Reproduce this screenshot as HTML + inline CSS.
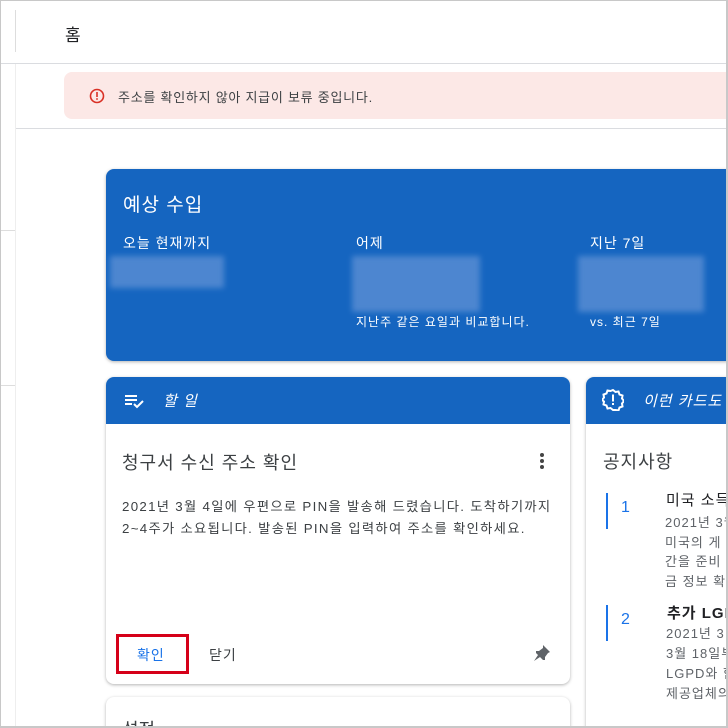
<!DOCTYPE html>
<html><head><meta charset="utf-8"><style>
*{margin:0;padding:0;box-sizing:border-box}
html,body{width:728px;height:728px;overflow:hidden}
body{background:#fff;font-family:"Liberation Sans","Noto Sans CJK KR",sans-serif;position:relative;color:#3c4043}
.a{position:absolute;white-space:nowrap}
.k{letter-spacing:1px}
.blur{position:absolute;background:#5b8fd4;filter:blur(3px);opacity:.8}
</style></head><body>
<div class="a" style="left:15px;top:10px;width:1px;height:42px;background:#ddd"></div>
<div class="a" style="left:15px;top:64px;width:1px;height:664px;background:#eee"></div>
<div class="a" style="left:0;top:63px;width:728px;height:1px;background:#dadce0"></div>
<div class="a" style="left:0;top:230px;width:15px;height:1px;background:#ddd"></div>
<div class="a" style="left:0;top:385px;width:15px;height:1px;background:#ddd"></div>
<div class="a" style="left:65px;top:21px;font-size:17px;color:#202124">홈</div>

<div class="a" style="left:64px;top:72px;width:670px;height:47px;background:#fce8e6;border-radius:8px"></div>
<svg class="a" style="left:89px;top:88px" width="16" height="16" viewBox="0 0 16 16"><circle cx="8" cy="8" r="6.5" fill="none" stroke="#d93025" stroke-width="1.6"/><rect x="7.2" y="4" width="1.6" height="5" fill="#d93025"/><rect x="7.2" y="10.2" width="1.6" height="1.6" fill="#d93025"/></svg>
<div class="a" style="left:118px;top:87px;font-size:13px;color:#3c4043;letter-spacing:.75px">주소를 확인하지 않아 지급이 보류 중입니다.</div>
<div class="a" style="left:16px;top:128px;width:712px;height:1px;background:#dadce0"></div>

<div class="a" style="left:106px;top:169px;width:630px;height:192px;background:#1565c0;border-radius:8px;box-shadow:0 1px 3px rgba(0,0,0,.3)"></div>
<div class="a k" style="left:123px;top:190px;font-size:19px;color:#fff">예상 수입</div>
<div class="a k" style="left:123px;top:233px;font-size:14px;color:#fff">오늘 현재까지</div>
<div class="a k" style="left:356px;top:233px;font-size:14px;color:#fff">어제</div>
<div class="a k" style="left:590px;top:233px;font-size:14px;color:#fff">지난 7일</div>
<div class="blur" style="left:110px;top:256px;width:114px;height:32px"></div>
<div class="blur" style="left:352px;top:256px;width:128px;height:56px"></div>
<div class="blur" style="left:578px;top:256px;width:126px;height:56px"></div>
<div class="a k" style="left:356px;top:313px;font-size:12px;color:#fff">지난주 같은 요일과 비교합니다.</div>
<div class="a k" style="left:590px;top:313px;font-size:12px;color:#fff">vs. 최근 7일</div>

<div class="a" style="left:106px;top:377px;width:464px;height:307px;background:#fff;border-radius:8px;box-shadow:0 1px 3px rgba(0,0,0,.3);overflow:hidden">
<div style="height:47px;background:#1565c0"></div></div>
<svg class="a" style="left:124px;top:393px" width="22" height="16" viewBox="0 0 22 16"><path d="M1 3h12M1 7h12M1 11h7" stroke="#fff" stroke-width="2"/><path d="M10 11l3 3 6-6" stroke="#fff" stroke-width="2" fill="none"/></svg>
<div class="a k" style="left:163px;top:390px;font-size:15px;color:#fff;font-style:italic">할 일</div>
<div class="a k" style="left:122px;top:449px;font-size:18px;color:#3c4043">청구서 수신 주소 확인</div>
<svg class="a" style="left:538px;top:452px" width="8" height="18"><circle cx="4" cy="3" r="2" fill="#444"/><circle cx="4" cy="9" r="2" fill="#444"/><circle cx="4" cy="15" r="2" fill="#444"/></svg>
<div class="a" style="left:122px;top:496px;font-size:13.3px;line-height:22px;color:#3c4043;letter-spacing:1.3px">2021년 3월 4일에 우편으로 PIN을 발송해 드렸습니다. 도착하기까지<br>2~4주가 소요됩니다. 발송된 PIN을 입력하여 주소를 확인하세요.</div>
<div class="a" style="left:116px;top:634px;width:73px;height:40px;border:3px solid #d50018"></div>
<div class="a k" style="left:137px;top:645px;font-size:14px;color:#1a73e8">확인</div>
<div class="a k" style="left:209px;top:645px;font-size:14px;color:#3c4043">닫기</div>
<svg class="a" style="left:532px;top:643px" width="20" height="20" viewBox="0 0 20 20"><path d="M11 2l7 7-2 1-3 4 0 3-2 0-7-7 0-2 3 0 4-3z M6 12l-4 6 6-4z" fill="#5f6368"/></svg>

<div class="a" style="left:106px;top:697px;width:464px;height:40px;background:#fff;border-radius:8px;box-shadow:0 1px 3px rgba(0,0,0,.3)"></div>
<div class="a" style="left:122px;top:716px;font-size:18px;color:#3c4043">설정</div>

<div class="a" style="left:586px;top:377px;width:160px;height:360px;background:#fff;border-radius:8px;box-shadow:0 1px 3px rgba(0,0,0,.3);overflow:hidden">
<div style="height:47px;background:#1565c0"></div></div>
<svg class="a" style="left:602px;top:389px" width="22" height="22" viewBox="0 0 22 22"><path d="M11 1l2.5 2 3-.5 1 3 3 1-.5 3 2 2.5-2 2.5.5 3-3 1-1 3-3-.5L11 21l-2.5-2-3 .5-1-3-3-1 .5-3L0 11l2-2.5-.5-3 3-1 1-3 3 .5z" fill="none" stroke="#fff" stroke-width="2"/><rect x="10" y="5.5" width="2" height="7" fill="#fff"/><rect x="10" y="14" width="2" height="2" fill="#fff"/></svg>
<div class="a k" style="left:643px;top:390px;font-size:15px;color:#fff;font-style:italic">이런 카드도 좋</div>
<div class="a k" style="left:603px;top:448px;font-size:18px;color:#3c4043">공지사항</div>
<div class="a" style="left:606px;top:493px;width:2px;height:36px;background:#1a73e8"></div>
<div class="a" style="left:621px;top:499px;font-size:16px;color:#1a73e8">1</div>
<div class="a k" style="left:666px;top:489px;font-size:15px;color:#202124">미국 소득</div>
<div class="a k" style="left:665px;top:513px;font-size:13px;line-height:19.5px;color:#5f6368">2021년 3월<br>미국의 게<br>간을 준비<br>금 정보 확</div>
<div class="a" style="left:606px;top:605px;width:2px;height:36px;background:#1a73e8"></div>
<div class="a" style="left:621px;top:611px;font-size:16px;color:#1a73e8">2</div>
<div class="a k" style="left:667px;top:602px;font-size:15px;color:#202124;font-weight:bold">추가 LGP</div>
<div class="a k" style="left:666px;top:624px;font-size:13px;line-height:20px;color:#5f6368">2021년 3<br>3월 18일부<br>LGPD와 함<br>제공업체의</div>
<div class="a" style="left:0;top:0;width:728px;height:728px;border:1px solid #c8c8c8;border-right:2px solid #c8c8c8;border-bottom:2px solid #c8c8c8"></div>
</body></html>
